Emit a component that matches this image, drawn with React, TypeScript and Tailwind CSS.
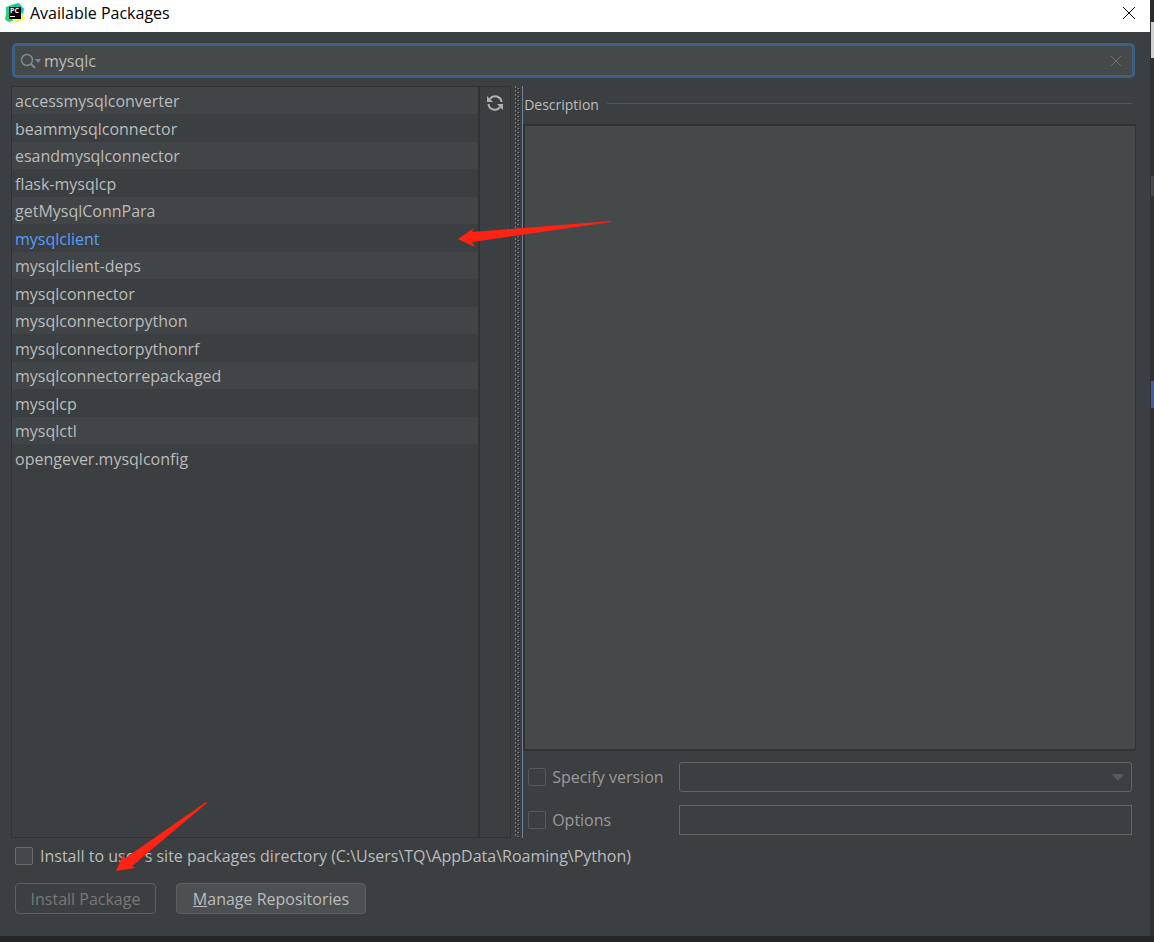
import React, { useState } from 'react'

const packages = [
  'accessmysqlconverter',
  'beammysqlconnector',
  'esandmysqlconnector',
  'flask-mysqlcp',
  'getMysqlConnPara',
  'mysqlclient',
  'mysqlclient-deps',
  'mysqlconnector',
  'mysqlconnectorpython',
  'mysqlconnectorpythonrf',
  'mysqlconnectorrepackaged',
  'mysqlcp',
  'mysqlctl',
  'opengever.mysqlconfig',
]

const Logo = () => (
  <svg className="w-5 h-5" viewBox="0 0 20 20">
    <path d="M1 4L9 1l3 3-6 12-5-1z" fill="#21d789" />
    <path d="M9 1l5-1 5 6-3 4-7-5z" fill="#16c9a5" />
    <path d="M16 4l3 2-1 4 2 6-7 3-8-1 4-5z" fill="#fcf84a" />
    <path d="M1 11l5 3 2 4-5 1-3-3z" fill="#2bd36f" />
    <path d="M15 3l4 3-1 5-3-2z" fill="#07c3f2" />
    <rect x="4" y="4" width="12" height="12" fill="#000" />
    <text x="5" y="10" fontSize="7" fontWeight="700" fontFamily="Open Sans, sans-serif" fill="#fff">PC</text>
    <rect x="5" y="13" width="5" height="1" fill="#fff" />
  </svg>
)

const App = () => {
  const [query, setQuery] = useState('mysqlc')
  const [selected, setSelected] = useState('mysqlclient')

  return (
    <div className="relative h-screen flex pb-[6px] bg-[#262626] font-['Open_Sans','Noto_Sans_CJK_SC',sans-serif] text-base text-[#bbbbbb]">
      <main className="flex-1 min-w-0 flex flex-col bg-[#3c3f41]">
        <header className="h-8 shrink-0 flex items-start justify-between bg-white pl-[5px] pr-3 text-black">
          <div className="flex items-center gap-[5px] pt-[3px]">
            <Logo />
            <h1 className="text-base leading-5">Available Packages</h1>
          </div>
          <button aria-label="Close" className="pt-[7px]">
            <svg className="w-[18px] h-[13px]" viewBox="0 0 18 13" fill="none" stroke="#000">
              <path d="M3 0l12 12M15 0L3 12" />
            </svg>
          </button>
        </header>

        <div className="flex-1 min-h-0 flex flex-col pt-[11px] pb-[22px]">
          <div className="h-[35px] shrink-0 ml-3 mr-[15px] flex items-center rounded-[5px] border-3 border-[#3d6185] bg-[#45494a] pl-[5px] pr-[11px]">
            <svg className="w-6 h-5 shrink-0" viewBox="0 0 24 20" fill="none">
              <circle cx="7" cy="9" r="5.5" stroke="#7f8b91" strokeWidth="1.5" />
              <path d="M11 13l4 4" stroke="#7f8b91" strokeWidth="2" />
              <path d="M15 8h6l-3 4z" fill="#7f8b91" />
            </svg>
            <input
              aria-label="Search packages"
              className="flex-1 min-w-0 bg-transparent outline-none"
              value={query}
              onChange={(e) => setQuery(e.target.value)}
            />
            <button aria-label="Clear" onClick={() => setQuery('')}>
              <svg className="w-[10px] h-[10px]" viewBox="0 0 10 10" fill="none" stroke="#6a7073">
                <path d="M0 0l10 10M10 0L0 10" />
              </svg>
            </button>
          </div>

          <div className="flex-1 min-h-0 flex mt-2 pl-[11px] pr-[14px]">
            <ul className="flex-[467] min-w-0 border border-[#323232]">
              {packages.map((name) => (
                <li key={name} className="h-[27px] even:h-7 even:pt-px odd:bg-[#414547]">
                  <button
                    onClick={() => setSelected(name)}
                    className={name === selected ? 'block w-full pl-[3px] text-left leading-7 text-[#589df6]' : 'block w-full pl-[3px] text-left leading-7'}
                  >
                    {name}
                  </button>
                </li>
              ))}
            </ul>
            <div className="w-8 shrink-0 flex flex-col items-center border border-[#323232] pt-2">
              <button aria-label="Reload list">
                <svg className="w-4 h-4" viewBox="0 0 16 16" fill="none" stroke="#afb1b3" strokeWidth="2">
                  <path d="M14.500 7A6.300 6.300 0 0 0 3 4M1.500 9A6.300 6.300 0 0 0 13 12" />
                  <path d="M0 1v6h6zM16 15V9h-6z" fill="#afb1b3" stroke="none" />
                </svg>
              </button>
            </div>
            <div className="w-3 shrink-0 flex justify-end border-r border-[#6f8294] pr-[2px]">
              <svg className="w-[6px] h-full">
                <defs>
                  <pattern id="grip" width="6" height="4" patternUnits="userSpaceOnUse">
                    <path d="M1 0h1v2H1zM3 2h2v1H3z" fill="#74777a" />
                    <path d="M2 2h1v1H2zM5 3h1v1H5z" fill="#242526" />
                  </pattern>
                </defs>
                <rect width="6" height="100%" fill="url(#grip)" />
              </svg>
            </div>

            <section className="flex-[614] min-w-0 flex flex-col">
              <div className="h-[38px] shrink-0 flex items-center gap-2 pl-px pr-1">
                <h2 className="text-sm">Description</h2>
                <hr className="flex-1 mb-1 border-[#515557]" />
              </div>
              <div className="flex-1 border-2 border-r border-[#323232] bg-[#45494a]" />
              <div className="flex flex-col gap-[13px] pt-[11px] pb-[3px] pl-[5px] pr-1 text-[#999999]">
                <div className="h-[30px] flex items-center">
                  <input id="specify" type="checkbox" disabled className="appearance-none w-[18px] h-[18px] rounded-xs border border-[#55595b]" />
                  <label htmlFor="specify" className="w-[133px] pl-[6px]">Specify version</label>
                  <div className="relative flex-1 h-full">
                    <select aria-label="Version" disabled className="appearance-none w-full h-full rounded-[3px] border border-[#646464]" />
                    <svg className="absolute right-2 top-3 w-3 h-[7px]" viewBox="0 0 12 7">
                      <path d="M0 0h12L6 7z" fill="#585b5d" />
                    </svg>
                  </div>
                </div>
                <div className="h-[30px] flex items-center">
                  <input id="options" type="checkbox" disabled className="appearance-none w-[18px] h-[18px] rounded-xs border border-[#55595b]" />
                  <label htmlFor="options" className="w-[133px] pl-[6px]">Options</label>
                  <input aria-label="Options value" disabled className="flex-1 min-w-0 h-full border border-[#646464]" />
                </div>
              </div>
            </section>
          </div>

          <div className="shrink-0 pl-[15px]">
            <div className="h-9 flex items-center">
              <input id="user-site" type="checkbox" className="appearance-none w-[18px] h-[18px] rounded-xs border border-[#6b6b6b] bg-[#43494a]" />
              <label htmlFor="user-site" className="pl-[7px]">Install to user's site packages directory (C:\Users\TQ\AppData\Roaming\Python)</label>
            </div>
            <div className="flex gap-5 mt-[9px]">
              <button disabled className="w-[141px] h-[31px] rounded-[4px] border border-[#5e6060] text-[#777777]">Install Package</button>
              <button className="w-[190px] h-[31px] rounded-[4px] border border-[#5e6060] bg-[#4c5052]">
                <span className="underline">M</span>anage Repositories
              </button>
            </div>
          </div>
        </div>
      </main>

      {/* sliver of the editor window behind the dialog */}
      <aside className="w-1 shrink-0 flex flex-col bg-[#2f3133]">
        <div className="h-[22px] bg-[#2b2b2b]" />
        <div className="h-9 ml-px bg-[#d0d0d0]" />
        <div className="mt-[118px] h-5 ml-px bg-[#45484a]" />
        <div className="mt-[185px] h-[27px] ml-px bg-[#3f5c9a]" />
      </aside>

      {/* callout arrows */}
      <svg className="absolute left-[458px] top-[219px] w-[156px] h-7" viewBox="0 0 156 28">
        <path d="M0 20L16 9l-2 4L153 2v1L14 23l3 5z" fill="#ff2314" />
      </svg>
      <svg className="absolute left-[115px] top-[800px] w-24 h-[72px]" viewBox="0 0 96 72">
        <path d="M1 71L9 53v6L91 2l1 1L17 66l3 2z" fill="#ff2314" />
      </svg>
    </div>
  )
}

export default App
